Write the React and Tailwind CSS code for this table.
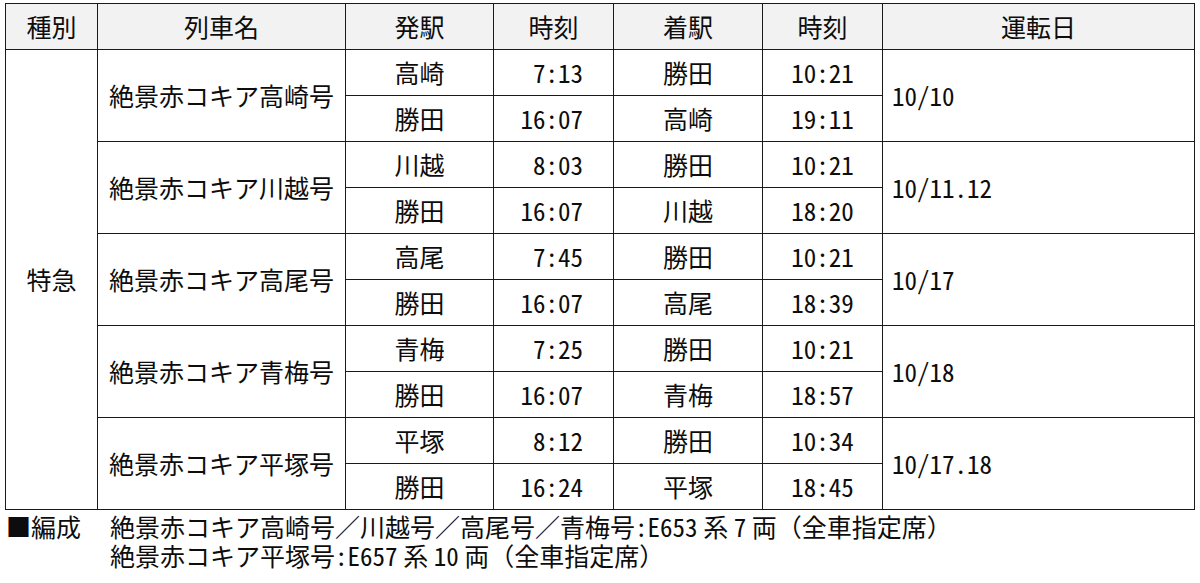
const trains = [
  {
    name: "絶景赤コキア高崎号",
    legs: [
      { from: "高崎", dep: "7:13", to: "勝田", arr: "10:21" },
      { from: "勝田", dep: "16:07", to: "高崎", arr: "19:11" },
    ],
    days: "10/10",
  },
  {
    name: "絶景赤コキア川越号",
    legs: [
      { from: "川越", dep: "8:03", to: "勝田", arr: "10:21" },
      { from: "勝田", dep: "16:07", to: "川越", arr: "18:20" },
    ],
    days: "10/11.12",
  },
  {
    name: "絶景赤コキア高尾号",
    legs: [
      { from: "高尾", dep: "7:45", to: "勝田", arr: "10:21" },
      { from: "勝田", dep: "16:07", to: "高尾", arr: "18:39" },
    ],
    days: "10/17",
  },
  {
    name: "絶景赤コキア青梅号",
    legs: [
      { from: "青梅", dep: "7:25", to: "勝田", arr: "10:21" },
      { from: "勝田", dep: "16:07", to: "青梅", arr: "18:57" },
    ],
    days: "10/18",
  },
  {
    name: "絶景赤コキア平塚号",
    legs: [
      { from: "平塚", dep: "8:12", to: "勝田", arr: "10:34" },
      { from: "勝田", dep: "16:24", to: "平塚", arr: "18:45" },
    ],
    days: "10/17.18",
  },
];

// half-width latin so the digits line up like the original print
function Num({ children }) {
  return <span className="[font-feature-settings:'hwid']">{children}</span>;
}

const cell = "border border-[#1a1a1a] p-0";

export default function App() {
  return (
    <div className="w-[1200px] h-[583px] bg-white text-[#0d0d0d] pl-[5px] pt-[3px] font-['Noto_Sans_CJK_JP','Noto_Sans',sans-serif] overflow-hidden">
      <table className="w-[1189px] table-fixed border-collapse text-[25px] leading-none">
        <colgroup>
          <col className="w-[92px]" />
          <col className="w-[248px]" />
          <col className="w-[148px]" />
          <col className="w-[120px]" />
          <col className="w-[149px]" />
          <col className="w-[120px]" />
          <col className="w-[312px]" />
        </colgroup>
        <thead>
          <tr className="h-[46px] bg-[#f2f2f2]">
            <th className={`${cell} font-normal`}>種別</th>
            <th className={`${cell} font-normal`}>列車名</th>
            <th className={`${cell} font-normal`}>発駅</th>
            <th className={`${cell} font-normal`}>時刻</th>
            <th className={`${cell} font-normal`}>着駅</th>
            <th className={`${cell} font-normal`}>時刻</th>
            <th className={`${cell} font-normal`}>運転日</th>
          </tr>
        </thead>
        <tbody>
          {trains.map((t, i) =>
            t.legs.map((leg, j) => (
              <tr key={`${i}-${j}`} className="h-[46px]">
                {i === 0 && j === 0 && (
                  <td rowSpan={10} className={`${cell} text-center`}>
                    特急
                  </td>
                )}
                {j === 0 && (
                  <td rowSpan={2} className={`${cell} text-center`}>
                    {t.name}
                  </td>
                )}
                <td className={`${cell} text-center`}>{leg.from}</td>
                <td className={`${cell} text-right pr-[30px]`}>
                  <Num>{leg.dep}</Num>
                </td>
                <td className={`${cell} text-center`}>{leg.to}</td>
                <td className={`${cell} text-center`}>
                  <Num>{leg.arr}</Num>
                </td>
                {j === 0 && (
                  <td rowSpan={2} className={`${cell} pl-[9px]`}>
                    <Num>{t.days}</Num>
                  </td>
                )}
              </tr>
            ))
          )}
        </tbody>
      </table>

      <div className="flex text-[25px] leading-[29px] mt-[2px]">
        <div className="w-[105px] pl-[1px]">■編成</div>
        <div>
          <p>
            絶景赤コキア高崎号／川越号／高尾号／青梅号<Num>:E653</Num> 系 <Num>7</Num> 両（全車指定席）
          </p>
          <p>
            絶景赤コキア平塚号<Num>:E657</Num> 系 <Num>10</Num> 両（全車指定席）
          </p>
        </div>
      </div>
    </div>
  );
}
